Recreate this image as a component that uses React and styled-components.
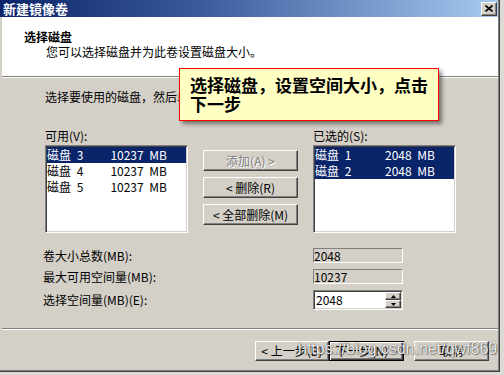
import React from 'react';
import styled, { createGlobalStyle, css } from 'styled-components';

const GlobalStyle = createGlobalStyle`
  *, *::before, *::after { box-sizing: border-box; }
  html, body { margin: 0; padding: 0; }
  body {
    width: 504px; height: 375px; overflow: hidden;
    background: #d4d0c8;
    font-family: "Noto Sans CJK SC", "Noto Sans", sans-serif;
    font-size: 12px; color: #000;
  }
`;

const Page = styled.div`
  position: relative;
  width: 504px;
  height: 375px;
  background: #dcdad4;
  overflow: hidden;
`;

const Dialog = styled.div`
  width: 500px;
  height: 372px;
  display: flex;
  border-right: 1px solid #404040;
  border-bottom: 1px solid #404040;
`;

const Frame = styled.div`
  flex: 1;
  display: flex;
  flex-direction: column;
  background: #d4d0c8;
  border-right: 1px solid #808080;
  border-bottom: 1px solid #808080;
`;

const TitleBar = styled.div`
  height: 17px;
  flex: none;
  display: flex;
  align-items: center;
  justify-content: space-between;
  padding: 0 1px 0 3px;
  background: linear-gradient(to right, #0a246a 0%, #3a5a9c 40%, #a6caf0 100%);
`;

const TitleText = styled.span`
  color: #fff;
  font-weight: bold;
  font-size: 13px;
  line-height: 17px;
`;

const CloseButton = styled.div`
  width: 16px;
  height: 14px;
  display: flex;
  align-items: center;
  justify-content: center;
  background: #d4d0c8;
  border: 1px solid;
  border-color: #fff #404040 #404040 #fff;
  box-shadow: inset -1px -1px #808080;
`;

const Content = styled.div`
  flex: 1;
  display: flex;
  flex-direction: column;
  border-left: 2px solid #d4d0c8;
`;

const Header = styled.div`
  height: 60px;
  flex: none;
  background: #fff;
  padding: 13px 0 0 22px;
  border-bottom: 1px solid #808080;
  box-shadow: 0 1px 0 #fff;
  margin-bottom: 1px;
`;

const HeaderTitle = styled.div`
  font-weight: bold;
  font-size: 12px;
  line-height: 14px;
`;

const HeaderSub = styled.div`
  font-size: 12px;
  line-height: 14px;
  margin: 1px 0 0 22px;
`;

const Body = styled.div`
  flex: 1;
  padding: 12px 0 0 43px;
  display: flex;
  flex-direction: column;
`;

const Text = styled.div`
  line-height: 14px;
  white-space: nowrap;
`;

const ListsGrid = styled.div`
  margin-top: 25px;
  display: grid;
  grid-template-columns: 143px 95px 143px;
  grid-template-rows: auto 88px;
  column-gap: 15px;
  row-gap: 2px;
`;

const ListBox = styled.div`
  height: 88px;
  background: #fff;
  padding: 1px;
  border: 1px solid;
  border-color: #808080 #fff #fff #808080;
  box-shadow: inset 1px 1px #404040, inset -1px -1px #d4d0c8;
`;

const ListRow = styled.div`
  height: 16px;
  display: grid;
  grid-template-columns: 70px 50px;
  line-height: 15px;
  white-space: nowrap;
  word-spacing: 3px;
  ${p => p.$selected && css`
    background: #0a246a;
    color: #fff;
  `}
`;

const Size = styled.span`
  justify-self: end;
`;

const ButtonCol = styled.div`
  display: flex;
  flex-direction: column;
  gap: 6px;
  padding-top: 5px;
`;

const WinButton = styled.div`
  height: ${p => p.$h || 21}px;
  width: ${p => (p.$w ? `${p.$w}px` : 'auto')};
  display: flex;
  align-items: center;
  justify-content: center;
  background: #d4d0c8;
  border: 1px solid;
  border-color: #fff #404040 #404040 #fff;
  box-shadow: inset -1px -1px #808080;
  line-height: 14px;
  white-space: nowrap;
  ${p => p.$disabled && css`
    color: #808080;
    text-shadow: 1px 1px 0 #fff;
  `}
  ${p => p.$default && css`
    border-color: #000;
    box-shadow: inset 1px 1px #fff, inset -1px -1px #404040, inset -2px -2px #808080;
  `}
`;

const Fields = styled.div`
  margin: 15px 0 0 -2px;
  display: grid;
  grid-template-columns: 270px 90px;
  grid-template-rows: 15px 15px 20px;
  row-gap: 6px;
  align-items: center;
`;

const ReadOnlyBox = styled.div`
  height: 15px;
  border: 1px solid;
  border-color: #808080 #fff #fff #808080;
  line-height: 13px;
  padding-left: 0;
`;

const SpinBox = styled.div`
  height: 20px;
  display: flex;
  background: #fff;
  border: 1px solid;
  border-color: #808080 #fff #fff #808080;
  box-shadow: inset 1px 1px #404040, inset -1px -1px #d4d0c8;
  padding: 1px;
`;

const SpinInput = styled.div`
  flex: 1;
  line-height: 16px;
  padding-left: 1px;
`;

const SpinButtons = styled.div`
  width: 16px;
  display: flex;
  flex-direction: column;
`;

const SpinBtn = styled.div`
  flex: 1;
  display: flex;
  align-items: center;
  justify-content: center;
  background: #d4d0c8;
  border: 1px solid;
  border-color: #fff #404040 #404040 #fff;
  box-shadow: inset -1px -1px #808080;
`;

const Footer = styled.div`
  height: 42px;
  flex: none;
  border-top: 1px solid #808080;
  box-shadow: inset 0 1px #fff;
  padding: 12px 9px 0 0;
  display: flex;
  justify-content: flex-end;
  align-items: flex-start;
`;

const Spacer = styled.div`
  width: 10px;
`;

const Callout = styled.div`
  position: absolute;
  left: 179px;
  top: 68px;
  width: 260px;
  height: 53px;
  background: #ffffc4;
  border: 1px solid #ff0000;
  box-shadow: 3px 3px 4px rgba(0, 0, 0, 0.45);
  padding: 6px 0 0 10px;
  font-size: 17px;
  font-weight: bold;
  line-height: 19px;
`;

const Watermark = styled.div`
  position: absolute;
  left: 298px;
  top: 340px;
  font-family: "Liberation Sans", Arial, sans-serif;
  font-size: 16px;
  color: rgba(255, 255, 255, 0.9);
  text-shadow: 0 0 1px rgba(40, 40, 40, 0.9), 1px 1px 1px rgba(0, 0, 0, 0.35);
  white-space: nowrap;
  pointer-events: none;
`;

const Arrow = ({ up }) => (
  <svg width="5" height="3" viewBox="0 0 5 3">
    <path d={up ? 'M2.5 0 L5 3 L0 3 Z' : 'M0 0 L5 0 L2.5 3 Z'} fill="#000" />
  </svg>
);

const available = [
  { name: '磁盘 3', size: '10237 MB', selected: true },
  { name: '磁盘 4', size: '10237 MB' },
  { name: '磁盘 5', size: '10237 MB' },
];

const chosen = [
  { name: '磁盘 1', size: '2048 MB', selected: true },
  { name: '磁盘 2', size: '2048 MB', selected: true },
];

const List = ({ items }) => (
  <ListBox>
    {items.map(it => (
      <ListRow key={it.name} $selected={it.selected}>
        <span>{it.name}</span>
        <Size>{it.size}</Size>
      </ListRow>
    ))}
  </ListBox>
);

export default function App() {
  return (
    <Page>
      <GlobalStyle />
      <Dialog>
        <Frame>
          <TitleBar>
            <TitleText>新建镜像卷</TitleText>
            <CloseButton>
              <svg width="8" height="7" viewBox="0 0 8 7">
                <path d="M0.5 0.5 L7.5 6.5 M7.5 0.5 L0.5 6.5" stroke="#000" strokeWidth="1.6" />
              </svg>
            </CloseButton>
          </TitleBar>
          <Content>
            <Header>
              <HeaderTitle>选择磁盘</HeaderTitle>
              <HeaderSub>您可以选择磁盘并为此卷设置磁盘大小。</HeaderSub>
            </Header>
            <Body>
              <Text>选择要使用的磁盘，然后单击“添加”。</Text>
              <ListsGrid>
                <Text>可用(V):</Text>
                <span />
                <Text>已选的(S):</Text>
                <List items={available} />
                <ButtonCol>
                  <WinButton $disabled>添加(A) &gt;</WinButton>
                  <WinButton>&lt; 删除(R)</WinButton>
                  <WinButton>&lt; 全部删除(M)</WinButton>
                </ButtonCol>
                <List items={chosen} />
              </ListsGrid>
              <Fields>
                <Text>卷大小总数(MB):</Text>
                <ReadOnlyBox>2048</ReadOnlyBox>
                <Text>最大可用空间量(MB):</Text>
                <ReadOnlyBox>10237</ReadOnlyBox>
                <Text>选择空间量(MB)(E):</Text>
                <SpinBox>
                  <SpinInput>2048</SpinInput>
                  <SpinButtons>
                    <SpinBtn><Arrow up /></SpinBtn>
                    <SpinBtn><Arrow /></SpinBtn>
                  </SpinButtons>
                </SpinBox>
              </Fields>
            </Body>
            <Footer>
              <WinButton $w={74} $h={20}>&lt; 上一步(B)</WinButton>
              <WinButton $w={75} $h={20} $default>下一步(N) &gt;</WinButton>
              <Spacer />
              <WinButton $w={75} $h={20}>取消</WinButton>
            </Footer>
          </Content>
        </Frame>
      </Dialog>
      <Callout>
        选择磁盘，设置空间大小，点击<br />下一步
      </Callout>
      <Watermark>https://blog.csdn.net/qwf869</Watermark>
    </Page>
  );
}
